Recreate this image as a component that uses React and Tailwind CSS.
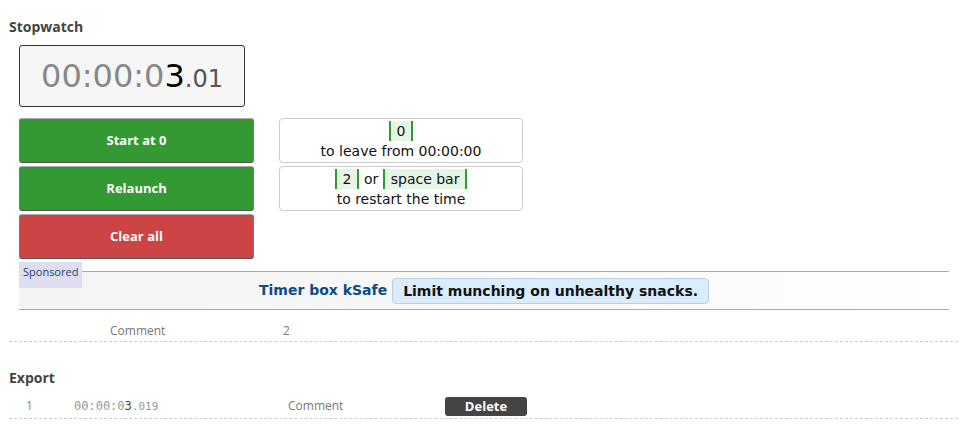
import React from 'react';

const sans = "font-['Open_Sans',sans-serif]";
const deja = "font-['DejaVu_Sans',sans-serif]";

const Key = ({ children }) => (
  <span className="inline-block px-[6px] border-x-2 border-[#339933] bg-[#e6f6e6] leading-[20px]">{children}</span>
);

const BigButton = ({ label, red }) => (
  <button
    className={`w-[235px] h-[45px] rounded-[3px] border border-t-[#aaa] border-x-[#777] border-b-[#555] text-white text-[13px] font-bold ${sans} ${red ? 'bg-[#cc4444]' : 'bg-[#339933]'}`}
  >
    {label}
  </button>
);

export default function App() {
  return (
    <div className={`w-[967px] h-[424px] bg-white pl-[9px] pr-[9px] pt-[18px] ${sans}`}>
      <h2 className="text-[14px] font-bold text-[#444] leading-[18px]">Stopwatch</h2>

      <div className="ml-[10px] mt-[9px] w-[226px] h-[62px] border border-[#333] rounded-[3px] bg-[#f6f6f6] flex items-center justify-center">
        <span className={`${deja} text-[32px] leading-none text-[#888]`}>
          00:00:0<span className="text-black">3</span>
          <span className="text-[24px] text-[#555]">.01</span>
        </span>
      </div>

      <div className="ml-[10px] mt-[11px] flex gap-[25px]">
        <div className="flex flex-col gap-[3px]">
          <BigButton label="Start at 0" />
          <BigButton label="Relaunch" />
          <BigButton label="Clear all" red />
        </div>
        <div className={`flex flex-col gap-[3px] ${deja} text-[14px] text-[#111]`}>
          <div className="w-[244px] h-[45px] border border-[#ccc] rounded-[4px] flex flex-col items-center justify-center leading-[20px]">
            <div><Key>0</Key></div>
            <div>to leave from 00:00:00</div>
          </div>
          <div className="w-[244px] h-[45px] border border-[#ccc] rounded-[4px] flex flex-col items-center justify-center leading-[20px]">
            <div><Key>2</Key> or <Key>space bar</Key></div>
            <div>to restart the time</div>
          </div>
        </div>
      </div>

      <div className="relative ml-[10px] mt-[12px] w-[930px] h-[39px] border-y border-[#aaa] bg-gradient-to-r from-[#f4f4f4] via-[#f8f8f8] to-white flex items-center justify-center">
        <span className="absolute left-0 top-[-10px] h-[26px] bg-[#dedef0] text-[11px] text-[#224477] px-[4px] leading-[20px]">Sponsored</span>
        <span className={`${deja} text-[14px] font-bold text-[#0d4a8a]`}>Timer box kSafe</span>
        <span className={`${deja} text-[14px] font-bold text-[#111] ml-[5px] px-[10px] h-[26px] leading-[24px] bg-[#dbecfc] border border-[#b9cfe4] rounded-[4px]`}>Limit munching on unhealthy snacks.</span>
      </div>

      <div className="mt-[10px] h-[22px] border-b border-dashed border-[#ccc] flex items-center text-[12px] text-[#777]">
        <span className="ml-[101px] w-[173px]">Comment</span>
        <span>2</span>
      </div>

      <h2 className="mt-[27px] text-[14px] font-bold text-[#444] leading-[18px]">Export</h2>

      <div className="mt-[7px] h-[25px] border-b border-dashed border-[#ccc] flex items-center text-[12px] text-[#888]">
        <span className="ml-[17px] w-[48px]">1</span>
        <span className={`font-['DejaVu_Sans_Mono',monospace] text-[12px] text-[#999] w-[214px]`}>
          00:00:0<span className="text-[#444]">3</span><span className="text-[11px]">.019</span>
        </span>
        <span className="w-[157px] text-[#777]">Comment</span>
        <button className="w-[82px] h-[19px] rounded-[3px] bg-[#444] text-white text-[13px] font-bold leading-[19px]">Delete</button>
      </div>
    </div>
  );
}
